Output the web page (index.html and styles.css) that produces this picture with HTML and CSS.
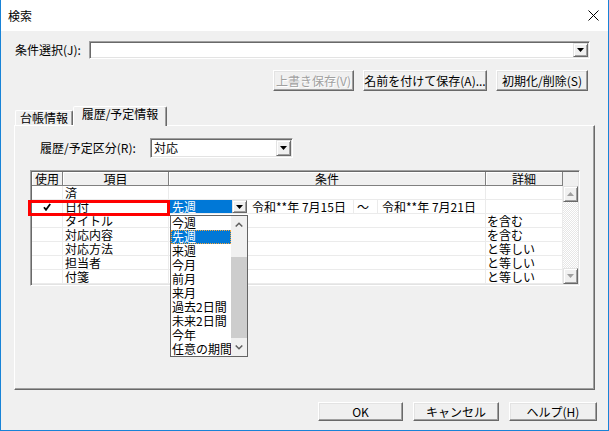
FILE: index.html
```html
<!DOCTYPE html>
<html lang="ja">

<head>
    <meta charset="UTF-8" />
    <meta name="viewport" content="width=device-width, initial-scale=1.0" />
    <title>検索</title>
    <link rel="stylesheet" href="styles.css">
</head>

<body>
    <div class="window">
        <div class="titlebar">
            <span class="title">検索</span>
            <svg class="close" width="11" height="11" viewBox="0 0 11 11">
                <path d="M0.5 0.5L10.5 10.5M10.5 0.5L0.5 10.5" stroke="#000" stroke-width="1" fill="none" />
            </svg>
        </div>

        <div class="client">
            <div class="cond-row">
                <span class="cond-label">条件選択(J):</span>
                <div class="combo combo--wide">
                    <span class="combo__text"></span>
                    <span class="combo__btn"><svg width="7" height="4" viewBox="0 0 7 4"><path d="M0 0H7L3.5 4Z" fill="#000" /></svg></span>
                </div>
            </div>

            <div class="save-row">
                <button class="btn btn--overwrite" disabled>上書き保存(V)</button>
                <button class="btn btn--saveas">名前を付けて保存(A)...</button>
                <button class="btn btn--reset">初期化/削除(S)</button>
            </div>

            <div class="tabs">
                <div class="tab">台帳情報</div>
                <div class="tab tab--active">履歴/予定情報</div>
            </div>

            <div class="panel">
                <div class="kubun-row">
                    <span class="kubun-label">履歴/予定区分(R):</span>
                    <div class="combo combo--kubun">
                        <span class="combo__text">対応</span>
                        <span class="combo__btn"><svg width="7" height="4" viewBox="0 0 7 4"><path d="M0 0H7L3.5 4Z" fill="#000" /></svg></span>
                    </div>
                </div>

                <div class="grid">
                    <div class="grid__head">
                        <div class="hcell hcell--use">使用</div>
                        <div class="hcell hcell--item">項目</div>
                        <div class="hcell hcell--cond">条件</div>
                        <div class="hcell hcell--detail">詳細</div>
                        <div class="hcell--blank"></div>
                    </div>

                    <div class="grid__body">
                        <div class="rows">
                            <div class="row">
                                <div class="cell"></div>
                                <div class="cell cell--item">済</div>
                                <div class="cell"></div>
                                <div class="cell"></div>
                            </div>
                            <div class="row">
                                <div class="cell cell--use">
                                    <svg width="8" height="8" viewBox="0 0 8 8"><path d="M1 4.2L3 6.8L7.2 1" stroke="#000" stroke-width="1.8" fill="none" /></svg>
                                </div>
                                <div class="cell cell--item">日付</div>
                                <div class="cell cell--date">
                                    <span class="sel-value">先週</span>
                                    <span class="combo__btn cell-btn"><svg width="7" height="4" viewBox="0 0 7 4"><path d="M0 0H7L3.5 4Z" fill="#000" /></svg></span>
                                    <span class="date">令和**年 7月15日</span>
                                    <span class="tilde">～</span>
                                    <span class="date date--to">令和**年 7月21日</span>
                                </div>
                                <div class="cell"></div>
                            </div>
                            <div class="row">
                                <div class="cell"></div>
                                <div class="cell cell--item">タイトル</div>
                                <div class="cell"></div>
                                <div class="cell cell--detail">を含む</div>
                            </div>
                            <div class="row">
                                <div class="cell"></div>
                                <div class="cell cell--item">対応内容</div>
                                <div class="cell"></div>
                                <div class="cell cell--detail">を含む</div>
                            </div>
                            <div class="row">
                                <div class="cell"></div>
                                <div class="cell cell--item">対応方法</div>
                                <div class="cell"></div>
                                <div class="cell cell--detail">と等しい</div>
                            </div>
                            <div class="row">
                                <div class="cell"></div>
                                <div class="cell cell--item">担当者</div>
                                <div class="cell"></div>
                                <div class="cell cell--detail">と等しい</div>
                            </div>
                            <div class="row">
                                <div class="cell"></div>
                                <div class="cell cell--item">付箋</div>
                                <div class="cell"></div>
                                <div class="cell cell--detail">と等しい</div>
                            </div>
                        </div>

                        <div class="vscroll">
                            <span class="sb-btn"><svg width="7" height="4" viewBox="0 0 7 4"><path d="M0 4H7L3.5 0Z" fill="#a0a0a0" /></svg></span>
                            <span class="sb-track"></span>
                            <span class="sb-btn"><svg width="7" height="4" viewBox="0 0 7 4"><path d="M0 0H7L3.5 4Z" fill="#a0a0a0" /></svg></span>
                        </div>
                    </div>

                    <!-- red marker around the selected row -->
                    <div class="mark"></div>

                    <!-- open dropdown of the 条件 cell -->
                    <div class="dropdown">
                        <div class="dd-items">
                            <div class="dd-item">今週</div>
                            <div class="dd-item dd-item--sel">先週</div>
                            <div class="dd-item">来週</div>
                            <div class="dd-item">今月</div>
                            <div class="dd-item">前月</div>
                            <div class="dd-item">来月</div>
                            <div class="dd-item">過去2日間</div>
                            <div class="dd-item">未来2日間</div>
                            <div class="dd-item">今年</div>
                            <div class="dd-item">任意の期間</div>
                        </div>
                        <div class="dd-scroll">
                            <span class="dd-arrow"><svg width="8" height="5" viewBox="0 0 8 5"><path d="M0.7 4.5L4 1.2L7.3 4.5" stroke="#606060" stroke-width="1.5" fill="none" /></svg></span>
                            <span class="dd-gap"></span>
                            <span class="dd-thumb"></span>
                            <span class="dd-arrow dd-arrow--down"><svg width="8" height="5" viewBox="0 0 8 5"><path d="M0.7 0.5L4 3.8L7.3 0.5" stroke="#606060" stroke-width="1.5" fill="none" /></svg></span>
                        </div>
                    </div>
                </div>
            </div>

            <div class="dialog-buttons">
                <button class="btn btn--ok">OK</button>
                <button class="btn btn--cancel">キャンセル</button>
                <button class="btn btn--help">ヘルプ(H)</button>
            </div>
        </div>
    </div>
</body>

</html>
```

FILE: styles.css
```css
* {
    box-sizing: border-box;
}

body {
    margin: 0;
    font-family: "Noto Sans CJK JP", "Noto Sans", sans-serif;
    font-size: 12px;
    line-height: 14px;
    color: #000;
}

.window {
    width: 609px;
    height: 431px;
    border: 1px solid #1883d7;
    border-top: none;
    display: flex;
    flex-direction: column;
    background-color: #f0f0f0;
}

.titlebar {
    height: 31px;
    background-color: #fff;
    display: flex;
    align-items: center;
    justify-content: space-between;
    padding: 0 9px 0 7px;
}

.close {
    margin-top: -1px;
}

.client {
    flex: 1;
}

/* combo boxes: sunken field + raised arrow button */
.combo {
    display: flex;
    background-color: #fff;
    border: 1px solid;
    border-color: #a0a0a0 #fff #fff #a0a0a0;
    padding: 1px;
    box-shadow: inset 1px 1px #696969, inset -1px -1px #e3e3e3;
}

.combo__text {
    flex: 1;
    padding-left: 2px;
    line-height: 14px;
    white-space: nowrap;
}

.combo__btn {
    width: 15px;
    display: flex;
    align-items: center;
    justify-content: center;
    background-color: #f0f0f0;
    border: 1px solid;
    border-color: #e3e3e3 #696969 #696969 #e3e3e3;
    box-shadow: inset 1px 1px #fff, inset -1px -1px #a0a0a0;
}

.cond-row {
    display: flex;
    align-items: center;
    margin: 10px 18px 0 14px;
}

.cond-label {
    width: 74px;
}

.combo--wide {
    flex: 1;
    height: 18px;
}

.save-row {
    display: flex;
    justify-content: flex-end;
    gap: 9px;
    margin: 11px 20px 0 0;
}

.btn {
    height: 21px;
    padding: 0;
    font: inherit;
    color: #000;
    background-color: #f0f0f0;
    border: 1px solid;
    border-color: #fff #696969 #696969 #fff;
    box-shadow: inset -1px -1px #a0a0a0, inset 1px 1px #e3e3e3;
}

.btn:disabled {
    color: #a0a0a0;
    text-shadow: 1px 1px 0 #fff;
}

.btn--overwrite {
    width: 81px;
}

.btn--saveas {
    width: 124px;
}

.btn--reset {
    width: 92px;
}

/* tab strip sits over the panel's top edge */
.tabs {
    position: relative;
    z-index: 1;
    display: flex;
    align-items: flex-start;
    height: 20px;
    margin: 15px 0 -1px 14px;
}

.tab {
    width: 58px;
    height: 15px;
    margin-top: 4px;
    text-align: center;
    line-height: 13px;
    border: 1px solid;
    border-bottom: none;
    border-color: #fff #696969 transparent #fff;
    border-radius: 2px 2px 0 0;
    box-shadow: inset -1px 0 #a0a0a0;
}

.tab--active {
    width: 94px;
    height: 20px;
    margin-top: 0;
    line-height: 14px;
    background-color: #f0f0f0;
}

.panel {
    width: 581px;
    height: 265px;
    margin-left: 13px;
    border: 1px solid;
    border-color: #fff #696969 #696969 #fff;
    box-shadow: inset -1px -1px #a0a0a0;
}

.kubun-row {
    display: flex;
    align-items: center;
    margin-top: 12px;
    padding-left: 25px;
}

.kubun-label {
    width: 110px;
}

.combo--kubun {
    width: 143px;
    height: 20px;
}

.combo--kubun .combo__text {
    line-height: 16px;
}

/* list view */
.grid {
    position: relative;
    width: 550px;
    height: 116px;
    margin: 12px 0 0 15px;
    padding: 1px;
    background-color: #fff;
    border: 1px solid;
    border-color: #a0a0a0 #fff #fff #a0a0a0;
    box-shadow: inset 1px 1px #696969, inset -1px -1px #e3e3e3;
}

.grid__head {
    display: flex;
    height: 14px;
    background-color: #f0f0f0;
}

.hcell {
    text-align: center;
    line-height: 13px;
    border-right: 1px solid #808080;
    border-bottom: 1px solid #808080;
    box-shadow: inset 1px 1px #fff;
}

.hcell--use {
    width: 31px;
}

.hcell--item {
    width: 106px;
}

.hcell--cond {
    width: 317px;
}

.hcell--detail {
    width: 77px;
}

.hcell--blank {
    width: 15px;
}

.grid__body {
    display: flex;
    height: 98px;
}

.rows {
    width: 531px;
}

.row {
    display: grid;
    grid-template-columns: 31px 106px 317px 77px;
    height: 14px;
}

.cell {
    line-height: 13px;
    white-space: nowrap;
    border-right: 1px solid #ebebeb;
    border-bottom: 1px solid #ebebeb;
}

.cell--use {
    display: flex;
    align-items: center;
    justify-content: center;
}

.cell--item {
    padding-left: 2px;
}

.cell--detail {
    padding-left: 1px;
}

.cell--date {
    display: flex;
    padding-left: 1px;
}

.sel-value {
    width: 62px;
    padding-left: 2px;
    background-color: #0078d7;
    color: #fff;
}

.cell-btn {
    height: 13px;
}

.date {
    width: 107px;
    padding-left: 5px;
    border-right: 1px solid #ebebeb;
}

.tilde {
    width: 24px;
    padding-left: 3px;
    border-right: 1px solid #ebebeb;
}

.date--to {
    flex: 1;
    width: auto;
    padding-left: 4px;
    border-right: none;
}

.vscroll {
    width: 15px;
    display: flex;
    flex-direction: column;
}

.sb-btn {
    height: 16px;
    display: flex;
    align-items: center;
    justify-content: center;
    background-color: #f0f0f0;
    border: 1px solid;
    border-color: #e3e3e3 #696969 #696969 #e3e3e3;
    box-shadow: inset 1px 1px #fff, inset -1px -1px #a0a0a0;
}

.sb-track {
    flex: 1;
    background: repeating-conic-gradient(#fff 0 25%, #e6e6e6 0 50%) 0 0 / 2px 2px;
}

.mark {
    position: absolute;
    left: -3px;
    top: 29px;
    width: 142px;
    height: 16px;
    border: 3px solid #ff0000;
}

.dropdown {
    position: absolute;
    left: 139px;
    top: 44px;
    width: 78px;
    height: 142px;
    display: flex;
    background-color: #fff;
    border: 1px solid #646464;
}

.dd-items {
    width: 60px;
    overflow: hidden;
}

.dd-item {
    height: 14px;
    line-height: 14px;
    padding-left: 1px;
    white-space: nowrap;
}

.dd-item--sel {
    background-color: #0078d7;
    color: #fff;
    outline: 1px dotted #f5a53a;
    outline-offset: -1px;
}

.dd-scroll {
    width: 16px;
    display: flex;
    flex-direction: column;
    background-color: #f0f0f0;
}

.dd-arrow {
    height: 17px;
    display: flex;
    align-items: center;
    justify-content: center;
}

.dd-gap {
    height: 24px;
}

.dd-thumb {
    height: 81px;
    background-color: #cdcdcd;
}

.dd-arrow--down {
    flex: 1;
}

.dialog-buttons {
    display: flex;
    justify-content: flex-end;
    gap: 10px;
    margin: 12px 11px 0 0;
}

.dialog-buttons .btn {
    height: 19px;
}

.btn--ok {
    width: 85px;
}

.btn--cancel {
    width: 86px;
}

.btn--help {
    width: 88px;
}
```
